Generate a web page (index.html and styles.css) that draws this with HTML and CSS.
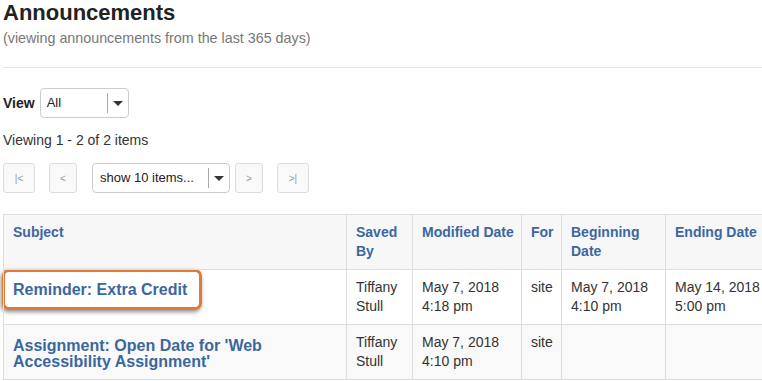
FILE: index.html
```html
<!DOCTYPE html>
<html lang="en">
<head>
    <meta charset="UTF-8">
    <meta name="viewport" content="width=device-width, initial-scale=1.0">
    <title>Announcements</title>
    <link rel="stylesheet" href="styles.css">
</head>
<body>
    <h1 class="title">Announcements</h1>
    <p class="subtitle">(viewing announcements from the last 365 days)</p>
    <hr class="divider">

    <div class="view-row">
        <span class="view-label">View</span>
        <div class="select select-view">
            <span class="select-value">All</span>
            <span class="select-arrow"></span>
        </div>
    </div>

    <p class="count">Viewing 1 - 2 of 2 items</p>

    <div class="pager">
        <button class="pager-btn wide first">|&lt;</button>
        <button class="pager-btn prev">&lt;</button>
        <div class="select select-pager">
            <span class="select-value">show 10 items...</span>
            <span class="select-arrow"></span>
        </div>
        <button class="pager-btn next">&gt;</button>
        <button class="pager-btn wide">&gt;|</button>
    </div>

    <div class="table-wrap">
        <table class="announcements">
            <colgroup>
                <col class="col-subject">
                <col class="col-saved">
                <col class="col-modified">
                <col class="col-for">
                <col class="col-begin">
                <col class="col-end">
            </colgroup>
            <thead>
                <tr>
                    <th>Subject</th>
                    <th>Saved By</th>
                    <th>Modified Date</th>
                    <th>For</th>
                    <th>Beginning Date</th>
                    <th>Ending Date</th>
                </tr>
            </thead>
            <tbody>
                <tr>
                    <td><a href="#" class="subject callout">Reminder: Extra Credit</a></td>
                    <td>Tiffany Stull</td>
                    <td>May 7, 2018<br>4:18 pm</td>
                    <td>site</td>
                    <td>May 7, 2018<br>4:10 pm</td>
                    <td>May 14, 2018<br>5:00 pm</td>
                </tr>
                <tr>
                    <td><a href="#" class="subject">Assignment: Open Date for 'Web<br>Accessibility Assignment'</a></td>
                    <td>Tiffany Stull</td>
                    <td>May 7, 2018<br>4:10 pm</td>
                    <td>site</td>
                    <td></td>
                    <td></td>
                </tr>
            </tbody>
        </table>
    </div>
</body>
</html>
```

FILE: styles.css
```css
body {
    margin: 0;
    padding: 0 0 0 3px;
    font-family: "Liberation Sans", Arial, sans-serif;
    font-size: 14px;
    line-height: 20px;
    color: #333;
    background: #fff;
    overflow: hidden;
}
.title {
    margin: 1px 0 0;
    font-size: 22px;
    line-height: 24px;
    font-weight: bold;
    color: #222;
}
.subtitle {
    margin: 3px 0 0;
    font-size: 14.3px;
    color: #777;
}
.divider {
    margin: 19px 0 0;
    border: 0;
    border-top: 1px solid #e6e6e6;
}
.view-row {
    display: flex;
    align-items: center;
    gap: 5px;
    margin-top: 20px;
}
.view-label {
    font-weight: bold;
    color: #222;
}
.select {
    display: flex;
    align-items: center;
    height: 30px;
    box-sizing: border-box;
    border: 1px solid #ccc;
    border-radius: 4px;
    background: #fff;
    font-size: 13px;
    color: #222;
}
.select-view {
    width: 89px;
}
.select-pager {
    width: 138px;
    margin-right: 5px;
}
.select-value {
    flex: 1;
    padding-left: 6px;
}
.select-pager .select-value {
    padding-left: 7px;
}
.select-arrow {
    display: flex;
    align-items: center;
    justify-content: center;
    box-sizing: border-box;
    width: 21px;
    height: 20px;
    border-left: 1px solid #aaa;
}
.select-arrow::after {
    content: "";
    border-left: 5px solid transparent;
    border-right: 5px solid transparent;
    border-top: 5px solid #333;
}
.count {
    margin: 12px 0 0;
}
.pager {
    display: flex;
    margin-top: 13px;
}
.pager-btn {
    width: 28px;
    height: 30px;
    box-sizing: border-box;
    padding: 0;
    border: 1px solid #ddd;
    border-radius: 3px;
    background: #f9f9f9;
    color: #999;
    font-family: "Liberation Sans", Arial, sans-serif;
    font-size: 10px;
}
.pager-btn.wide {
    width: 32px;
}
.pager-btn.first,
.pager-btn.next {
    margin-right: 14px;
}
.pager-btn.prev {
    margin-right: 15px;
}
.table-wrap {
    margin: 21px 0 0 -3px;
    padding-left: 3px;
    overflow: hidden;
}
.announcements {
    width: 772px;
    table-layout: fixed;
    border-collapse: collapse;
}
.col-subject { width: 343px; }
.col-saved { width: 66px; }
.col-modified { width: 109px; }
.col-for { width: 40px; }
.col-begin { width: 104px; }
.col-end { width: 110px; }
.announcements th,
.announcements td {
    border: 1px solid #ddd;
    padding: 8px 6px 8px 9px;
    vertical-align: top;
    text-align: left;
    line-height: 19px;
}
.announcements th {
    background: #f7f7f7;
    color: #3b67a1;
    font-weight: bold;
}
.announcements tbody tr:nth-child(2) td {
    background: #f9f9f9;
}
.subject {
    display: block;
    margin-top: 5px;
    font-size: 16px;
    line-height: 16px;
    font-weight: bold;
    color: #3b67a1;
    text-decoration: none;
}
.subject.callout {
    width: fit-content;
    margin: -9px 0 -9px -11px;
    padding: 10px 12px 9px 8px;
    border: 3px solid #df7a38;
    border-radius: 7px;
    background: #fff;
    box-shadow: -1px 2px 4px rgba(0, 0, 0, 0.45);
}
```
